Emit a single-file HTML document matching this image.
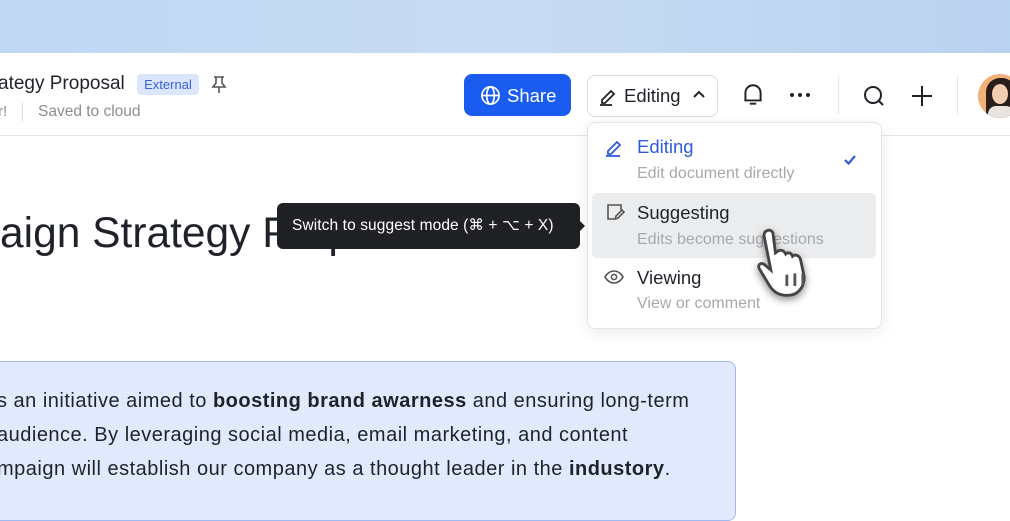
<!DOCTYPE html>
<html><head><meta charset="utf-8"><style>
*{margin:0;padding:0;box-sizing:border-box}
body{width:1010px;height:501px;overflow:hidden;background:#fff;font-family:"Liberation Sans",sans-serif;position:relative;color:#1f2329}
.a{position:absolute;white-space:nowrap}
</style></head><body>
<div class="a" style="left:0;top:0;width:1010px;height:53px;background:linear-gradient(90deg,#bfd8f4,#c8dcf3 50%,#b9d2f0)"></div>
<div class="a" style="left:0;top:135px;width:1010px;height:1px;background:#e3e5e8"></div>

<div class="a" style="left:-2px;top:73px;font-size:19px;color:#1f2329">ategy Proposal</div>
<div class="a" style="left:137px;top:74px;width:62px;height:21px;background:#dbe5fb;border-radius:4px;color:#3762d6;font-size:13px;line-height:21px;text-align:center">External</div>
<svg class="a" style="left:210px;top:75px" width="18" height="20" viewBox="0 0 18 20" fill="none" stroke="#555" stroke-width="1.6"><path d="M4 2h10M6 2v6l-3 4h12l-3-4V2M9 12v6"/></svg>
<div class="a" style="left:-2px;top:103px;font-size:15px;color:#8a8d92">r!</div>
<div class="a" style="left:22px;top:103px;width:1px;height:18px;background:#dcdcdc"></div>
<div class="a" style="left:38px;top:103px;font-size:15.5px;color:#8a8d92">Saved to cloud</div>

<div class="a" style="left:464px;top:74px;width:107px;height:42px;background:#1a5cf0;border-radius:8px"></div>
<svg class="a" style="left:480px;top:85px" width="21" height="21" viewBox="0 0 22 22" fill="none" stroke="#fff" stroke-width="1.8"><circle cx="11" cy="11" r="9"/><ellipse cx="11" cy="11" rx="4" ry="9"/><path d="M2 11h18"/></svg>
<div class="a" style="left:507px;top:85px;font-size:18.5px;color:#fff">Share</div>

<div class="a" style="left:587px;top:75px;width:131px;height:42px;border:1px solid #d9dbde;border-radius:8px"></div>
<svg class="a" style="left:598px;top:85px" width="22" height="22" viewBox="0 0 22 22" fill="none" stroke="#1f2329" stroke-width="1.8"><path d="M4 15l9-9 3 3-9 9H4z"/><path d="M2 20h12"/></svg>
<div class="a" style="left:624px;top:85px;font-size:18.5px">Editing</div>
<svg class="a" style="left:692px;top:88px" width="14" height="12" viewBox="0 0 14 12" fill="none" stroke="#1f2329" stroke-width="2"><path d="M2 9l5-5 5 5"/></svg>

<svg class="a" style="left:741px;top:82px" width="24" height="26" viewBox="0 0 22 24" fill="none" stroke="#1f2329" stroke-width="1.8"><path d="M4 17V10a7 7 0 0114 0v7H3h16M8 20h6"/></svg>
<div class="a" style="left:790px;top:93px;width:4px;height:4px;border-radius:2px;background:#1f2329;box-shadow:8px 0 #1f2329,16px 0 #1f2329"></div>
<div class="a" style="left:838px;top:76px;width:1px;height:38px;background:#e3e5e8"></div>
<svg class="a" style="left:862px;top:84px" width="24" height="24" viewBox="0 0 24 24" fill="none" stroke="#1f2329" stroke-width="2"><circle cx="11" cy="11" r="8"/><path d="M17 17l4 4"/></svg>
<svg class="a" style="left:910px;top:84px" width="24" height="24" viewBox="0 0 24 24" fill="none" stroke="#1f2329" stroke-width="2"><path d="M12 2v20M2 12h20"/></svg>
<div class="a" style="left:957px;top:76px;width:1px;height:38px;background:#e3e5e8"></div>
<div class="a" style="left:978px;top:74px;width:44px;height:44px;border-radius:50%;overflow:hidden;background:#f2b07a">
<div style="position:absolute;left:8px;top:4px;width:30px;height:42px;border-radius:14px 14px 4px 4px;background:#2a1e1a"></div>
<div style="position:absolute;left:14px;top:10px;width:16px;height:20px;border-radius:50%;background:#f1cdb2"></div>
<div style="position:absolute;left:10px;top:32px;width:26px;height:14px;border-radius:8px 8px 0 0;background:#e9e4df"></div></div>

<div class="a" style="left:0;top:210px;font-size:42.5px;color:#1f2329">aign Strategy Proposal</div>

<div class="a" style="left:277px;top:203px;width:303px;height:46px;background:#1f2125;border-radius:6px;color:#fff;font-size:15.5px;line-height:46px;padding-left:15px;letter-spacing:.1px">Switch to suggest mode (⌘ + ⌥ + X)</div>
<div class="a" style="left:579px;top:220px;width:0;height:0;border-top:6px solid transparent;border-bottom:6px solid transparent;border-left:6px solid #1f2125"></div>

<div class="a" style="left:587px;top:122px;width:295px;height:207px;background:#fff;border:1px solid #e3e5e8;border-radius:8px;box-shadow:0 4px 16px rgba(0,0,0,.08)"></div>
<div class="a" style="left:592px;top:193px;width:284px;height:65px;background:#ebecee;border-radius:5px"></div>
<svg class="a" style="left:604px;top:136px" width="22" height="22" viewBox="0 0 22 22" fill="none" stroke="#2f5bd8" stroke-width="1.8"><path d="M4 15l9-9 3 3-9 9H4z"/><path d="M2 20h14"/></svg>
<div class="a" style="left:637px;top:136px;font-size:18.5px;color:#2f5bd8">Editing</div>
<div class="a" style="left:637px;top:165px;font-size:16px;color:#a5a8ad">Edit document directly</div>
<svg class="a" style="left:843px;top:154px" width="14" height="12" viewBox="0 0 14 12" fill="none" stroke="#2f5bd8" stroke-width="2.2"><path d="M2 6l3.5 3.5L12 2"/></svg>
<svg class="a" style="left:605px;top:202px" width="20" height="20" viewBox="0 0 20 20" fill="none" stroke="#555" stroke-width="1.6"><path d="M9 17H3V3h13v5"/><path d="M10 17l1-3 6-6 2 2-6 6z"/></svg>
<div class="a" style="left:637px;top:202px;font-size:18.5px">Suggesting</div>
<div class="a" style="left:637px;top:231px;font-size:16px;color:#a5a8ad">Edits become suggestions</div>
<svg class="a" style="left:604px;top:268px" width="20" height="18" viewBox="0 0 20 18" fill="none" stroke="#555" stroke-width="1.6"><path d="M1 9s3-6 9-6 9 6 9 6-3 6-9 6-9-6-9-6z"/><circle cx="10" cy="9" r="2.6"/></svg>
<div class="a" style="left:637px;top:267px;font-size:18.5px">Viewing</div>
<div class="a" style="left:637px;top:295px;font-size:16px;color:#a5a8ad">View or comment</div>

<svg class="a" style="left:748px;top:222px;filter:drop-shadow(0 3px 4px rgba(0,0,0,.45))" width="80" height="80" viewBox="0 0 70 70"><path d="M16 8c3-2 6 0 6 3l2 16 3-2c3-1 5 1 6 3 2-2 5-1 6 2 2-2 6-1 7 3l3 14c1 8-4 16-12 17-8 1-14-2-18-8L10 41c-2-3 1-6 4-4l6 5-6-30c0-2 1-4 2-4z" fill="#fff" stroke="#444" stroke-width="2.5"/><path d="M34 46v10M41 45v11M48 45v10" stroke="#555" stroke-width="2.5"/></svg>

<div class="a" style="left:-10px;top:361px;width:746px;height:160px;background:#e1eafd;border:1px solid #9fbaee;border-radius:8px"></div>
<div class="a" style="left:-3px;top:384px;font-size:20px;line-height:34px;letter-spacing:.5px;color:#1f2329">
s an initiative aimed to <b>boosting brand awarness</b> and ensuring long-term<br>audience. By leveraging social media, email marketing, and content<br>mpaign will establish our company as a thought leader in the <b>industory</b>.</div>
</body></html>
